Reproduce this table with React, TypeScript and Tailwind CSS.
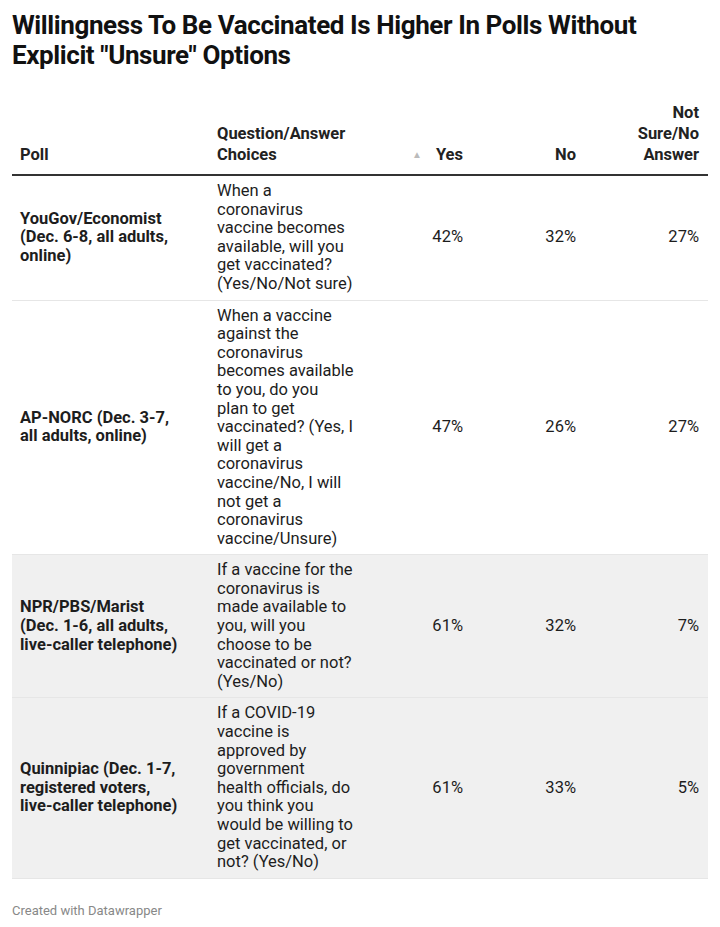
const rows = [
  {
    poll: 'YouGov/Economist (Dec. 6-8, all adults, online)',
    question: ['When a', 'coronavirus', 'vaccine becomes', 'available, will you', 'get vaccinated?', '(Yes/No/Not sure)'],
    yes: '42%',
    no: '32%',
    unsure: '27%',
    shaded: false,
  },
  {
    poll: 'AP-NORC (Dec. 3-7, all adults, online)',
    question: [
      'When a vaccine',
      'against the',
      'coronavirus',
      'becomes available',
      'to you, do you',
      'plan to get',
      'vaccinated? (Yes, I',
      'will get a',
      'coronavirus',
      'vaccine/No, I will',
      'not get a',
      'coronavirus',
      'vaccine/Unsure)',
    ],
    yes: '47%',
    no: '26%',
    unsure: '27%',
    shaded: false,
  },
  {
    poll: 'NPR/PBS/Marist (Dec. 1-6, all adults, live-caller telephone)',
    question: [
      'If a vaccine for the',
      'coronavirus is',
      'made available to',
      'you, will you',
      'choose to be',
      'vaccinated or not?',
      '(Yes/No)',
    ],
    yes: '61%',
    no: '32%',
    unsure: '7%',
    shaded: true,
  },
  {
    poll: 'Quinnipiac (Dec. 1-7, registered voters, live-caller telephone)',
    question: [
      'If a COVID-19',
      'vaccine is',
      'approved by',
      'government',
      'health officials, do',
      'you think you',
      'would be willing to',
      'get vaccinated, or',
      'not? (Yes/No)',
    ],
    yes: '61%',
    no: '33%',
    unsure: '5%',
    shaded: true,
  },
];

export default function App() {
  return (
    <div className="w-[720px] min-h-[927px] bg-white font-['Roboto',sans-serif] text-[#1d1d1d]">
      <h1 className="px-3 pt-[10px] text-[26px] leading-[30px] font-bold tracking-[-0.4px] text-[#111]">
        Willingness To Be Vaccinated Is Higher In Polls Without Explicit "Unsure" Options
      </h1>

      <div className="mx-3 mt-[32px]">
        {/* header */}
        <div className="grid grid-cols-[197px_156px_106px_113px_124px] items-end border-b-2 border-[#333] pb-[9px] text-[16.5px] leading-[21px] font-bold text-[#222]">
          <div className="pl-2">Poll</div>
          <div className="pl-2 pr-2">Question/Answer Choices</div>
          <div className="flex items-center justify-end gap-[14px] px-2">
            <span className="text-[10px] leading-none text-[#bbb]">▲</span>
            <span>Yes</span>
          </div>
          <div className="px-2 text-right">No</div>
          <div className="pl-8 pr-[9px] text-right">Not Sure/No Answer</div>
        </div>

        {rows.map((r) => (
          <div
            key={r.poll}
            className={`grid grid-cols-[197px_156px_106px_113px_124px] items-center border-b border-[#e6e6e6] py-[6px] text-[16.5px] leading-[18.6px] ${
              r.shaded ? 'bg-[#f0f0f0]' : 'bg-white'
            }`}
          >
            <div className="pl-2 pr-[28px] font-bold">{r.poll}</div>
            <div className="pl-2 whitespace-nowrap">
              {r.question.map((line, i) => (
                <div key={i}>{line}</div>
              ))}
            </div>
            <div className="px-2 text-right">{r.yes}</div>
            <div className="px-2 text-right">{r.no}</div>
            <div className="pl-8 pr-[9px] text-right">{r.unsure}</div>
          </div>
        ))}
      </div>

      <div className="px-3 pt-[22px] text-[13px] text-[#888]">Created with Datawrapper</div>
    </div>
  );
}
